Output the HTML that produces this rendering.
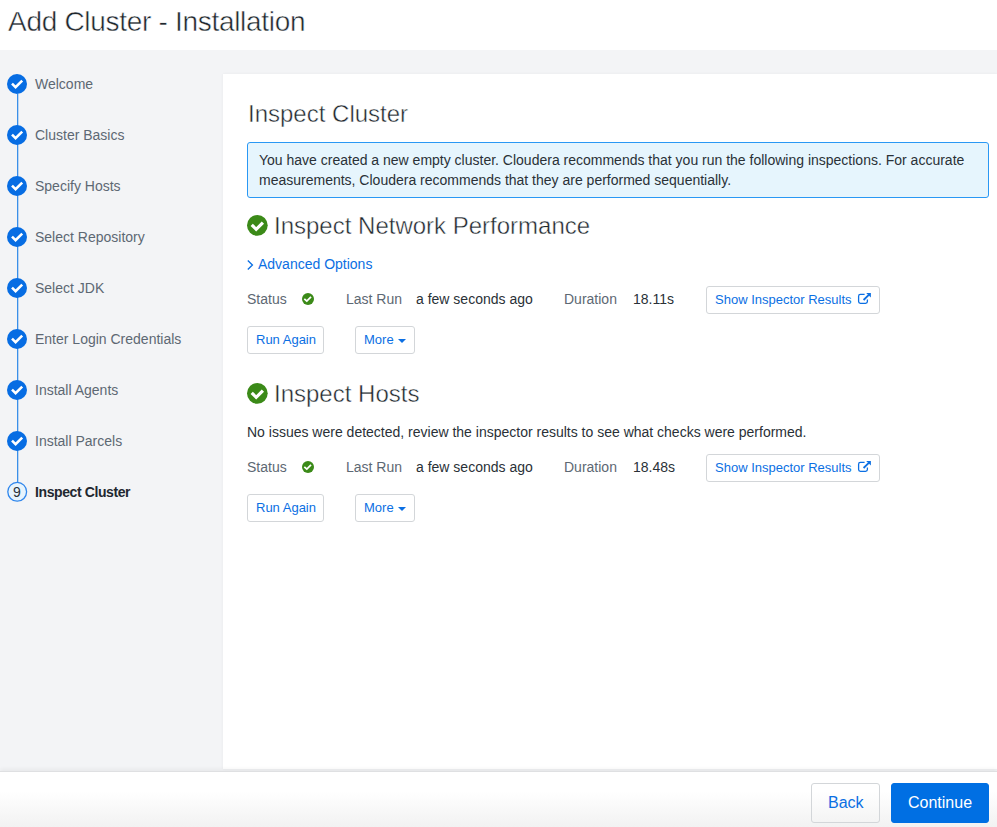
<!DOCTYPE html>
<html><head><meta charset="utf-8">
<style>
*{margin:0;padding:0;box-sizing:border-box}
html,body{width:997px;height:827px;overflow:hidden;background:#fff;font-family:"Liberation Sans",sans-serif;}
.abs{position:absolute;white-space:nowrap}
svg{position:absolute;overflow:visible}
#title{left:8px;top:4px;font-size:28px;line-height:36px;color:#20272d;letter-spacing:-0.3px;-webkit-text-stroke:0.5px #fff}
#side{position:absolute;left:0;top:50px;width:997px;height:722px;background:#f3f4f6;}
#panel{position:absolute;left:223px;top:74px;width:774px;height:695px;background:#fff;box-shadow:0 0 3px rgba(0,0,0,0.05)}
.step{position:absolute;left:35px;font-size:14px;line-height:20px;color:#5d6873;white-space:nowrap}
.vline{position:absolute;left:17px;width:1px;background:#3a8fe8;box-shadow:1px 0 0 rgba(58,143,232,0.3)}
h2{position:absolute;font-weight:normal;white-space:nowrap;color:#20272d;font-size:24px;line-height:30px;-webkit-text-stroke:0.45px #fff}
.info{position:absolute;left:247px;top:142px;width:742px;height:56px;background:#e6f5fd;border:1px solid #2a98f4;border-radius:3px;}
.t14{font-size:14px;line-height:20px;}
.lbl{color:#5d6873}
.val{color:#2a3137}
.link{color:#0b6fe3}
.btn{position:absolute;border:1px solid #d3d6d9;border-radius:3px;background:#fff;}
.bt{position:absolute;white-space:nowrap;font-size:13px;line-height:16px;color:#0b6fe3;margin-top:1px}
#footer{position:absolute;left:0;top:771px;width:997px;height:56px;background:linear-gradient(#fff 0%,#fff 35%,#f2f2f2 100%);border-top:1px solid #dfe0e2;box-shadow:0 -2px 4px rgba(0,0,0,0.05);}
</style></head><body>
<div id="title" class="abs">Add Cluster - Installation</div>
<div id="side"></div>
<div id="panel"></div>

<div class="vline" style="top:94px;height:388px"></div>
<svg width="0" height="0"><defs>
<g id="bc"><circle cx="10" cy="10" r="10" fill="#076de3"/><polyline points="5,9.6 8.6,13.1 15.2,6.6" fill="none" stroke="#fff" stroke-width="2.6"/></g>
</defs></svg>
<svg style="left:7px;top:74px" width="20" height="20"><use href="#bc"/></svg>
<svg style="left:7px;top:125px" width="20" height="20"><use href="#bc"/></svg>
<svg style="left:7px;top:176px" width="20" height="20"><use href="#bc"/></svg>
<svg style="left:7px;top:227px" width="20" height="20"><use href="#bc"/></svg>
<svg style="left:7px;top:278px" width="20" height="20"><use href="#bc"/></svg>
<svg style="left:7px;top:329px" width="20" height="20"><use href="#bc"/></svg>
<svg style="left:7px;top:380px" width="20" height="20"><use href="#bc"/></svg>
<svg style="left:7px;top:431px" width="20" height="20"><use href="#bc"/></svg>
<svg style="left:7px;top:482px" width="20" height="20"><circle cx="10.2" cy="9.8" r="9.4" fill="#e7f4fd" stroke="#2f86ec" stroke-width="1.3"/><text x="10" y="14.8" text-anchor="middle" font-family="Liberation Sans" font-size="14" fill="#2b3238">9</text></svg>

<div class="step" style="top:74px">Welcome</div>
<div class="step" style="top:125px">Cluster Basics</div>
<div class="step" style="top:176px">Specify Hosts</div>
<div class="step" style="top:227px">Select Repository</div>
<div class="step" style="top:278px">Select JDK</div>
<div class="step" style="top:329px">Enter Login Credentials</div>
<div class="step" style="top:380px">Install Agents</div>
<div class="step" style="top:431px">Install Parcels</div>
<div class="step" style="top:482px;color:#1f2830;font-weight:bold;letter-spacing:-0.4px">Inspect Cluster</div>

<h2 style="left:248px;top:99px">Inspect Cluster</h2>
<div class="info"></div>
<div class="abs t14 val" style="left:259px;top:150px">You have created a new empty cluster. Cloudera recommends that you run the following inspections. For accurate</div>
<div class="abs t14 val" style="left:259px;top:170px">measurements, Cloudera recommends that they are performed sequentially.</div>

<svg style="left:247px;top:215px" width="21" height="21"><circle cx="10.35" cy="10.35" r="10.35" fill="#3b8a18"/><polyline points="4.7,9.9 9.2,14.3 15.9,7.6" fill="none" stroke="#fff" stroke-width="3.2"/></svg>
<h2 style="left:274px;top:211px">Inspect Network Performance</h2>
<svg style="left:244px;top:254px" width="20" height="20"><polyline points="3.8,6.6 8.4,11 3.8,15.4" fill="none" stroke="#0b6fe3" stroke-width="1.35"/></svg>
<div class="abs t14 link" style="left:258px;top:254px">Advanced Options</div>

<div class="abs t14 lbl" style="left:247px;top:289px">Status</div>
<svg style="left:302.3px;top:293.1px" width="12" height="12"><circle cx="6" cy="6" r="6" fill="#3b8a18"/><polyline points="2.3,5.8 4.8,8.1 9,3.9" fill="none" stroke="#fff" stroke-width="1.8"/></svg>
<div class="abs t14 lbl" style="left:346px;top:289px">Last Run</div>
<div class="abs t14 val" style="left:416px;top:289px">a few seconds ago</div>
<div class="abs t14 lbl" style="left:564px;top:289px">Duration</div>
<div class="abs t14 val" style="left:633px;top:289px">18.11s</div>
<div class="btn" style="left:706px;top:286px;width:174px;height:28px"></div>
<div class="bt" style="left:715px;top:291px">Show Inspector Results</div>
<svg style="left:852px;top:288px" width="24" height="24"><path d="M12.6,6.4 H8.4 Q6.6,6.4 6.6,8.2 V13.6 Q6.6,15.4 8.4,15.4 H13.6 Q15.4,15.4 15.4,13.6 V11.6" fill="none" stroke="#0b6fe3" stroke-width="1.3"/><path d="M11.6,12 L16.8,6.8" fill="none" stroke="#0b6fe3" stroke-width="1.8"/><path d="M14.2,5.1 H18.9 V9.6 Z" fill="#0b6fe3"/></svg>
<div class="btn" style="left:247px;top:326px;width:77px;height:28px"></div>
<div class="bt" style="left:256px;top:331px">Run Again</div>
<div class="btn" style="left:355px;top:326px;width:60px;height:28px"></div>
<div class="bt" style="left:364px;top:331px">More</div>
<svg style="left:398px;top:339px" width="8" height="4"><path d="M0,0 H8 L4,4 Z" fill="#0b6fe3"/></svg>

<svg style="left:247px;top:383px" width="21" height="21"><circle cx="10.35" cy="10.35" r="10.35" fill="#3b8a18"/><polyline points="4.7,9.9 9.2,14.3 15.9,7.6" fill="none" stroke="#fff" stroke-width="3.2"/></svg>
<h2 style="left:274px;top:379px">Inspect Hosts</h2>
<div class="abs t14 val" style="left:247px;top:422px">No issues were detected, review the inspector results to see what checks were performed.</div>

<div class="abs t14 lbl" style="left:247px;top:457px">Status</div>
<svg style="left:302.3px;top:461.1px" width="12" height="12"><circle cx="6" cy="6" r="6" fill="#3b8a18"/><polyline points="2.3,5.8 4.8,8.1 9,3.9" fill="none" stroke="#fff" stroke-width="1.8"/></svg>
<div class="abs t14 lbl" style="left:346px;top:457px">Last Run</div>
<div class="abs t14 val" style="left:416px;top:457px">a few seconds ago</div>
<div class="abs t14 lbl" style="left:564px;top:457px">Duration</div>
<div class="abs t14 val" style="left:633px;top:457px">18.48s</div>
<div class="btn" style="left:706px;top:454px;width:174px;height:28px"></div>
<div class="bt" style="left:715px;top:459px">Show Inspector Results</div>
<svg style="left:852px;top:456px" width="24" height="24"><path d="M12.6,6.4 H8.4 Q6.6,6.4 6.6,8.2 V13.6 Q6.6,15.4 8.4,15.4 H13.6 Q15.4,15.4 15.4,13.6 V11.6" fill="none" stroke="#0b6fe3" stroke-width="1.3"/><path d="M11.6,12 L16.8,6.8" fill="none" stroke="#0b6fe3" stroke-width="1.8"/><path d="M14.2,5.1 H18.9 V9.6 Z" fill="#0b6fe3"/></svg>
<div class="btn" style="left:247px;top:494px;width:77px;height:28px"></div>
<div class="bt" style="left:256px;top:499px">Run Again</div>
<div class="btn" style="left:355px;top:494px;width:60px;height:28px"></div>
<div class="bt" style="left:364px;top:499px">More</div>
<svg style="left:398px;top:507px" width="8" height="4"><path d="M0,0 H8 L4,4 Z" fill="#0b6fe3"/></svg>

<div id="footer"></div>
<div class="btn" style="left:811px;top:783px;width:69px;height:40px;background:transparent"></div>
<div class="bt" style="left:828px;top:792px;font-size:16px;line-height:20px">Back</div>
<div class="btn" style="left:891px;top:783px;width:98px;height:40px;background:#006fe3;border-color:#006fe3"></div>
<div class="bt" style="left:908px;top:792px;font-size:16px;line-height:20px;color:#fff">Continue</div>
</body></html>
